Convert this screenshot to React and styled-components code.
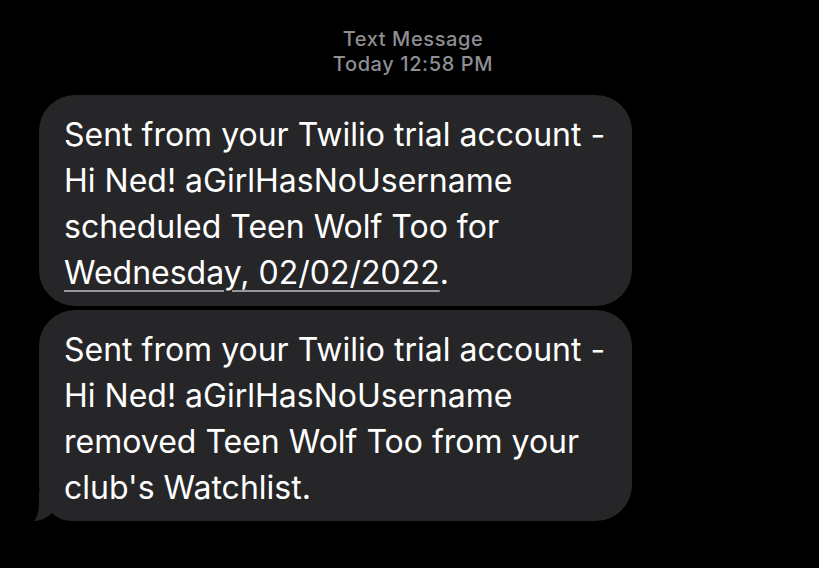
import styled, { createGlobalStyle } from "styled-components"

const GlobalStyle = createGlobalStyle`
    html, body {
        margin: 0;
        padding: 0;
        background: #000;
    }
    body {
        font-family: Inter, "Noto Sans", "Liberation Sans", sans-serif;
        -webkit-font-smoothing: antialiased;
    }
`

const messages = [
    {
        id: 1,
        lines: [
            "Sent from your Twilio trial account -",
            "Hi Ned! aGirlHasNoUsername",
            "scheduled Teen Wolf Too for",
        ],
        link: "Wednesday, 02/02/2022",
        tail: false,
    },
    {
        id: 2,
        lines: [
            "Sent from your Twilio trial account -",
            "Hi Ned! aGirlHasNoUsername",
            "removed Teen Wolf Too from your",
            "club's Watchlist.",
        ],
        tail: true,
    },
]

export default function App() {
    return (
        <Screen>
            <GlobalStyle />
            <Header>
                <span>Text Message</span>
                <span>Today 12:58 PM</span>
            </Header>
            <Thread>
                {messages.map((msg) => (
                    <Bubble key={msg.id}>
                        {msg.tail && (
                            <Tail width="44" height="32" viewBox="0 0 44 32">
                                <path
                                    d="M6 2 L6 14 C6 24 3 30 1 32 C7 32 14 29 19 24 C24 29 30 32 42 32 L42 2 Z"
                                    fill="#262628"
                                />
                            </Tail>
                        )}
                        {msg.lines.map((line, i) => (
                            <Line key={i}>{line}</Line>
                        ))}
                        {msg.link && (
                            <Line>
                                <DateLink>{msg.link}</DateLink>.
                            </Line>
                        )}
                    </Bubble>
                ))}
            </Thread>
        </Screen>
    )
}

const Screen = styled.div`
    width: 819px;
    height: 568px;
    background: #000;
    overflow: hidden;
    box-sizing: border-box;
    padding-top: 27px;
`

const Header = styled.div`
    display: flex;
    flex-direction: column;
    align-items: center;
    padding-left: 7px;
    color: #8e8e93;
    font-size: 20px;
    line-height: 25px;
    font-weight: 500;
    letter-spacing: 0.6px;
    margin-bottom: 18px;
`

const Thread = styled.div`
    display: flex;
    flex-direction: column;
    gap: 4px;
    padding-left: 39px;
`

const Bubble = styled.div`
    position: relative;
    width: 593px;
    box-sizing: border-box;
    padding: 17px 20px 10px 25px;
    background: #262628;
    border-radius: 36px;
    color: #fff;
    font-size: 32px;
    line-height: 46px;
`

const Line = styled.div`
    position: relative;
    white-space: nowrap;
`

const DateLink = styled.span`
    text-decoration: underline;
    text-decoration-color: #98989d;
    text-decoration-thickness: 2px;
    text-underline-offset: 6px;
`

const Tail = styled.svg`
    position: absolute;
    left: -6px;
    bottom: 0;
`
